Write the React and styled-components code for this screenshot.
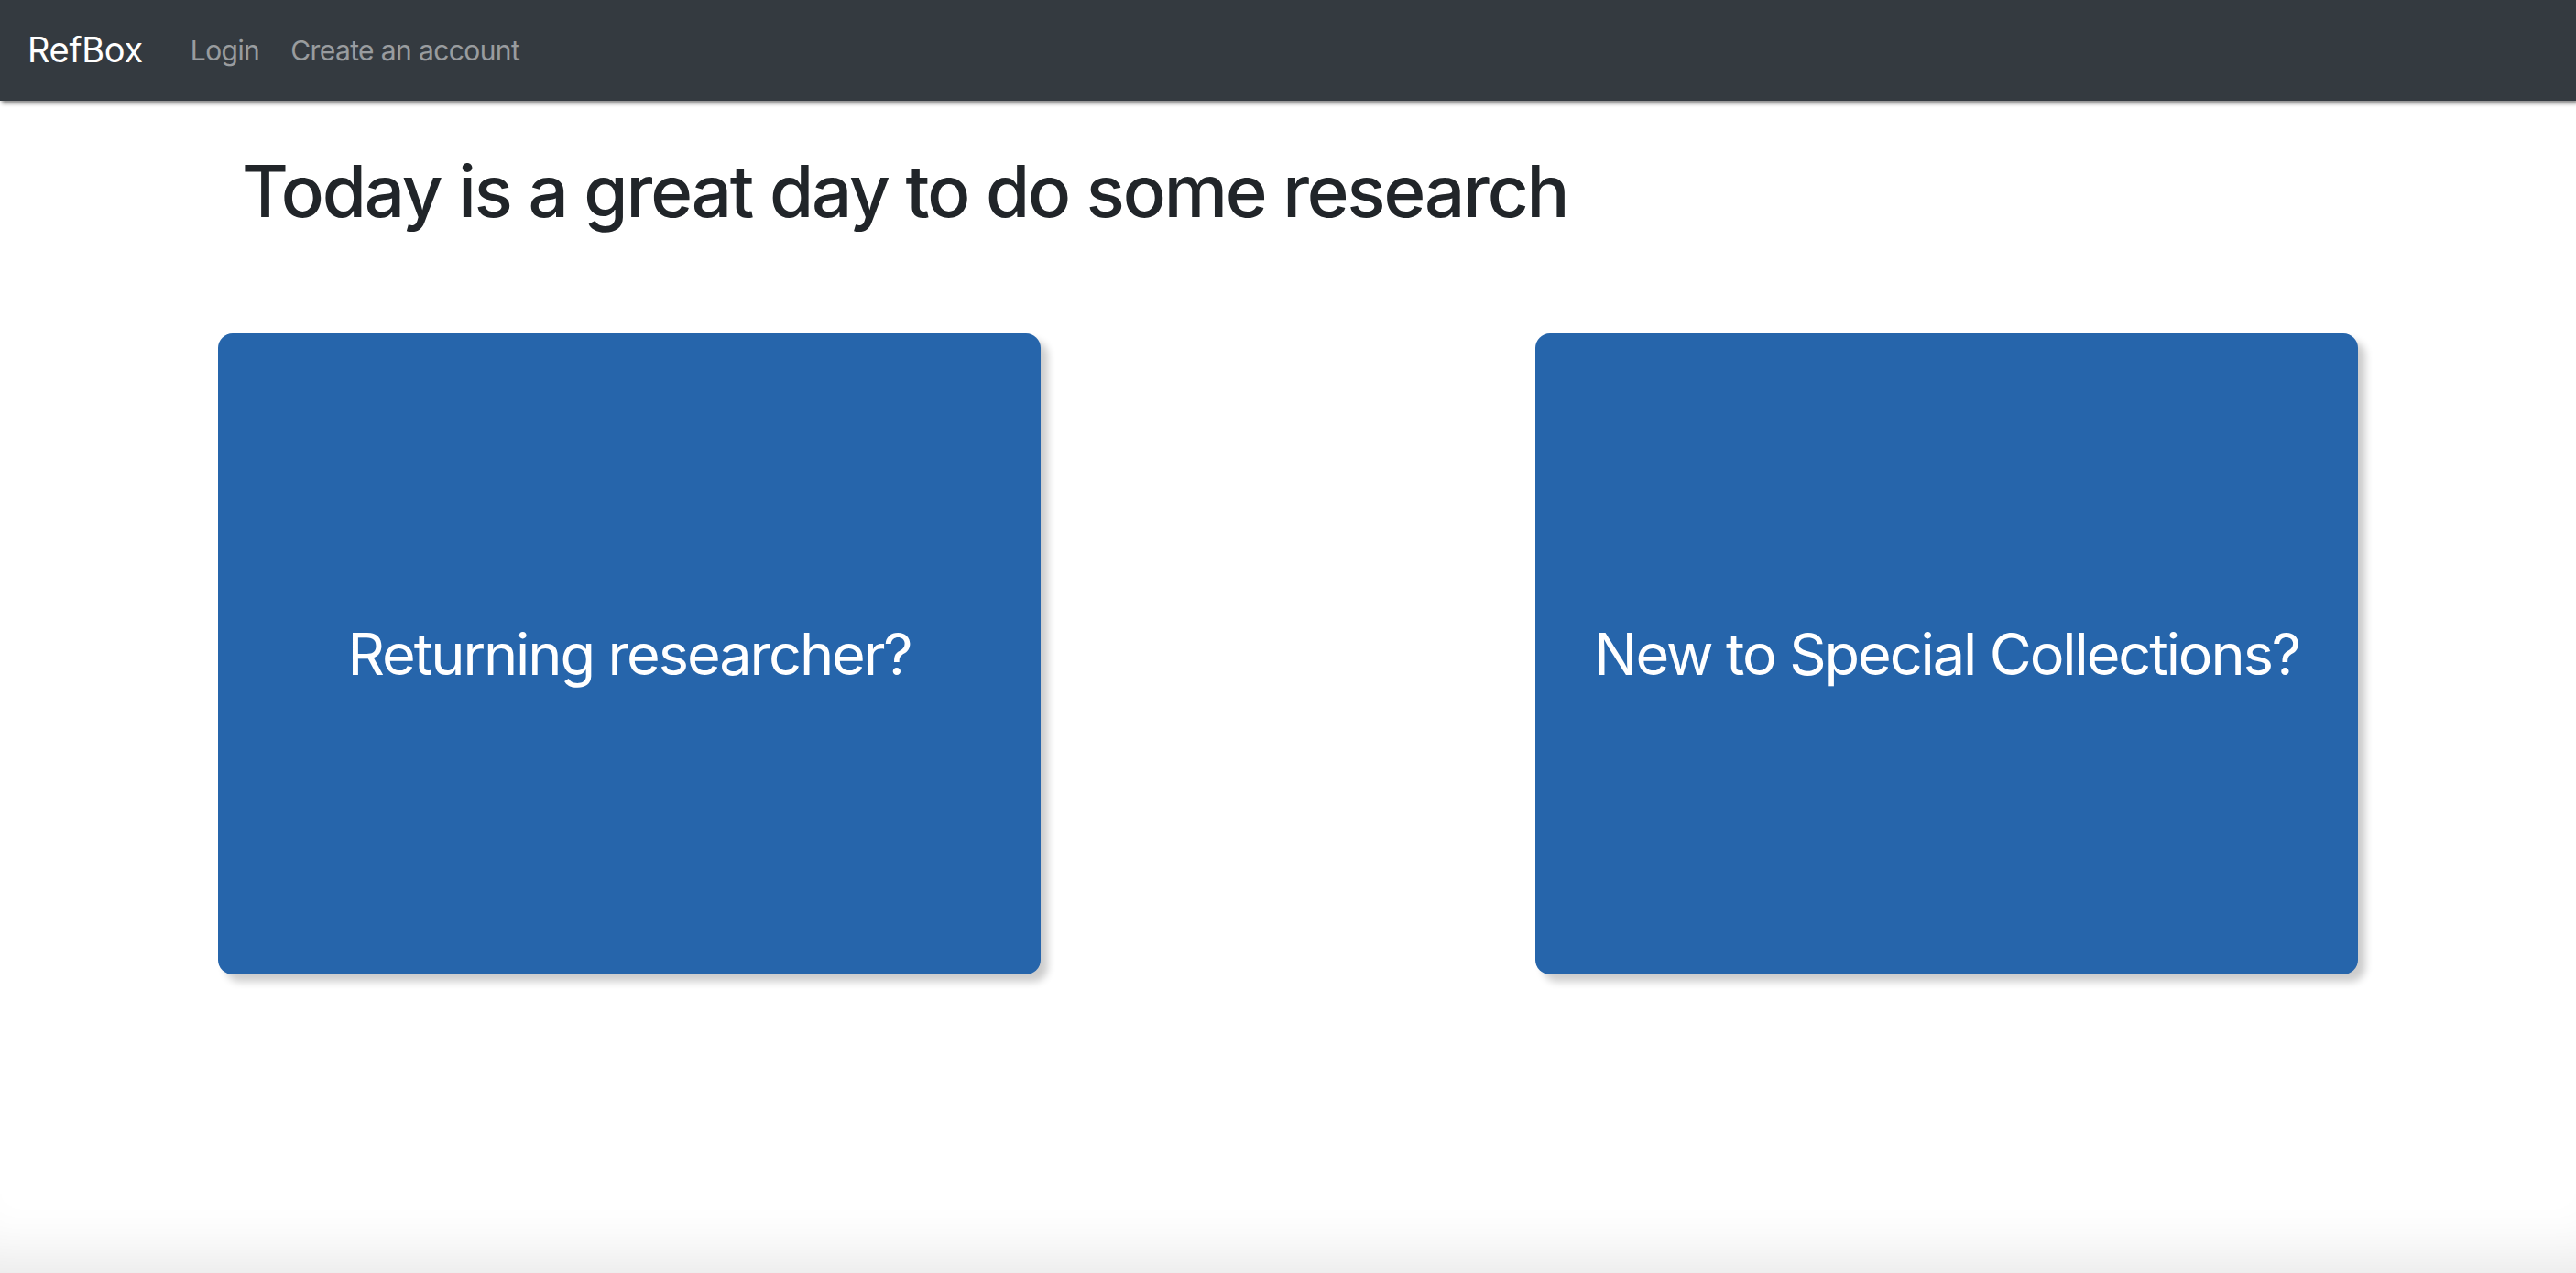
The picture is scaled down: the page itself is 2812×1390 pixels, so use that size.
import React from "react";
import styled, { createGlobalStyle } from "styled-components";

const Global = createGlobalStyle`
  html, body { margin: 0; padding: 0; background: #fff; }
  body { font-family: Inter, "Noto Sans", "Liberation Sans", sans-serif; color: #212529; }
  * { box-sizing: border-box; }
`;

const Page = styled.div`
  min-height: 100vh;
  display: flex;
  flex-direction: column;
  box-shadow: inset 0 -70px 60px -50px rgba(0, 0, 0, 0.09);
`;

const Navbar = styled.nav`
  height: 110px;
  background: #343a40;
  display: flex;
  align-items: center;
  padding: 0 30px;
  gap: 52px;
  box-shadow: 2px 3px 4px rgba(0, 0, 0, 0.45);
  position: relative;
  z-index: 1;
`;

const Brand = styled.a`
  color: #fff;
  font-size: 38px;
  letter-spacing: -0.3px;
  text-decoration: none;
  margin-top: -2px;
`;

const NavLinks = styled.div`
  display: flex;
  gap: 34px;
`;

const NavLink = styled.a`
  color: rgba(255, 255, 255, 0.5);
  font-size: 30px;
  letter-spacing: -0.6px;
  text-decoration: none;
`;

const Heading = styled.h1`
  margin: 52px 0 0 264px;
  font-size: 78px;
  font-weight: 500;
  line-height: 1.2;
  letter-spacing: -2.1px;
  color: #212529;
`;

const CardRow = styled.div`
  display: flex;
  justify-content: space-between;
  padding: 0 238px;
  margin-top: 108px;
`;

const Card = styled.a`
  width: 898px;
  height: 700px;
  background: #2665ab;
  border-radius: 16px;
  box-shadow: 8px 8px 8px rgba(0, 0, 0, 0.2);
  display: flex;
  align-items: center;
  justify-content: center;
  color: #fff;
  font-size: 63px;
  letter-spacing: -2.1px;
  text-decoration: none;
`;

export default function App() {
  return (
    <>
      <Global />
      <Page>
        <Navbar>
          <Brand href="#">RefBox</Brand>
          <NavLinks>
            <NavLink href="#">Login</NavLink>
            <NavLink href="#">Create an account</NavLink>
          </NavLinks>
        </Navbar>
        <Heading>Today is a great day to do some research</Heading>
        <CardRow>
          <Card href="#">Returning researcher?</Card>
          <Card href="#">New to Special Collections?</Card>
        </CardRow>
      </Page>
    </>
  );
}
